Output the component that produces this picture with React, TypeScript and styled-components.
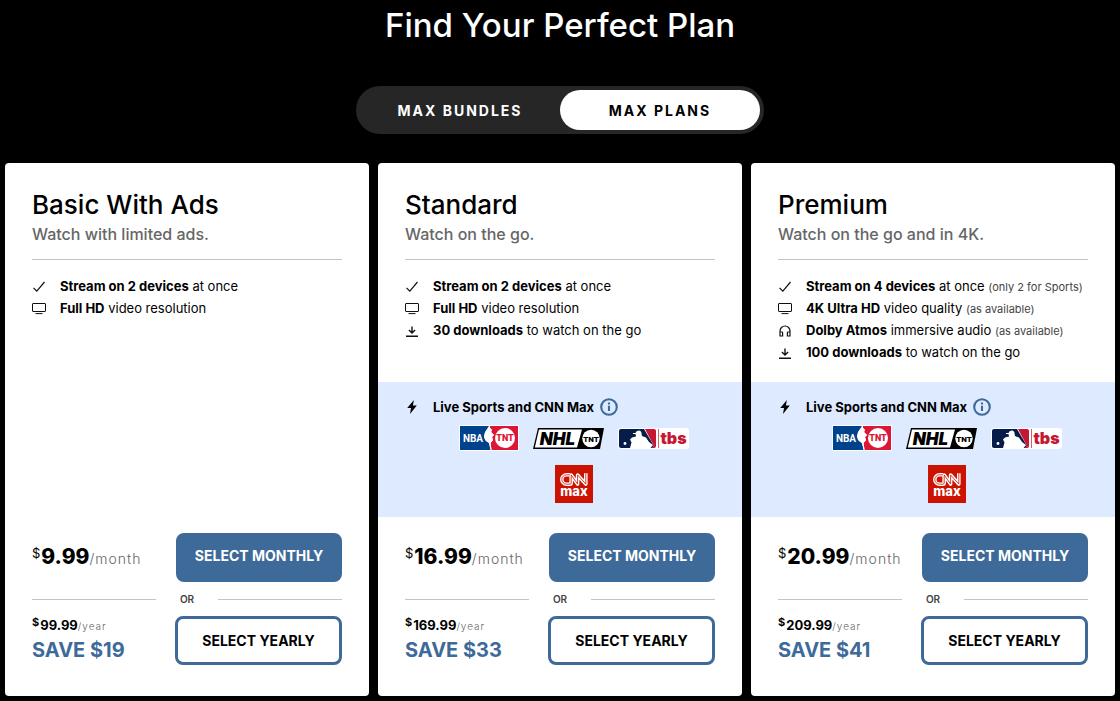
import React, { useState } from "react";
import styled, { createGlobalStyle, css } from "styled-components";

const GlobalStyle = createGlobalStyle`
  *, *::before, *::after { box-sizing: border-box; }
  body {
    margin: 0;
    background: #000;
    color: #000;
    font-family: Inter, "Liberation Sans", sans-serif;
  }
  h1, h2, p, ul { margin: 0; padding: 0; }
  button { font-family: inherit; cursor: pointer; }
`;

const BLUE = "#3e6a99";

const Page = styled.main`
  padding: 0 5px 5px;
`;

const PageTitle = styled.h1`
  padding-top: 5px;
  color: #fff;
  font-size: 33px;
  font-weight: 500;
  line-height: 40px;
  text-align: center;
`;

const Toggle = styled.div`
  display: grid;
  grid-template-columns: 1fr 1fr;
  width: 100%;
  max-width: 408px;
  margin: 41px auto 29px;
  padding: 4px;
  border-radius: 24px;
  background: #262626;
`;

const ToggleButton = styled.button<{ $active: boolean }>`
  height: 40px;
  padding: 0;
  border: 0;
  border-radius: 20px;
  background: ${(p) => (p.$active ? "#fff" : "transparent")};
  color: ${(p) => (p.$active ? "#000" : "#fff")};
  font-size: 14px;
  font-weight: 700;
  letter-spacing: 2px;
`;

const Plans = styled.section`
  display: grid;
  grid-template-columns: repeat(3, 1fr);
  gap: 9px;

  @media (max-width: 900px) {
    grid-template-columns: 1fr;
  }
`;

const Card = styled.article`
  display: flex;
  flex-direction: column;
  border-radius: 4px;
  background: #fff;
`;

const Summary = styled.div`
  flex: 1;
  padding: 26px 27px 19px;
`;

const PlanName = styled.h2`
  font-size: 26px;
  font-weight: 500;
  line-height: 32px;
`;

const Tagline = styled.p`
  padding: 2px 0 14px;
  border-bottom: 1px solid #c4c4c4;
  color: #666;
  font-size: 16px;
  font-weight: 500;
  line-height: 22px;
`;

const Features = styled.ul`
  margin-top: 15px;
  list-style: none;
`;

const Feature = styled.li`
  display: grid;
  grid-template-columns: 14px 1fr;
  gap: 14px;
  align-items: center;
  font-size: 13px;
  line-height: 22px;

  svg { display: block; }
`;

const Note = styled.small`
  color: #444;
  font-size: 11px;
  line-height: 1;
`;

const Extras = styled.div`
  padding: 14px 27px;
  background: #deeaff;
`;

const ExtrasHeading = styled(Feature).attrs({ as: "div" })`
  font-weight: 700;
`;

const HeadingText = styled.span`
  display: flex;
  align-items: center;
  gap: 6px;
`;

const InfoButton = styled.button`
  display: flex;
  padding: 0;
  border: 0;
  background: none;
`;

const Logos = styled.div`
  display: flex;
  flex-wrap: wrap;
  align-items: center;
  justify-content: center;
  gap: 14px;
  padding: 7px 20px 0 48px;

  svg { display: block; }
`;

const Purchase = styled.div`
  padding: 16px 27px 31px;
`;

const Option = styled.div`
  display: flex;
  align-items: center;
  justify-content: space-between;
`;

const MonthlyPrice = styled.p`
  display: flex;
  align-items: baseline;
  font-size: 21px;
  font-weight: 800;
  line-height: 32px;
`;

const YearlyPrice = styled(MonthlyPrice)`
  font-size: 13px;
  font-weight: 700;
  line-height: 18px;
`;

const Currency = styled.span<{ $light?: boolean }>`
  align-self: flex-start;
  padding-right: 1px;
  font-size: ${(p) => (p.$light ? "13px" : "11px")};
  font-weight: ${(p) => (p.$light ? 400 : 700)};
  line-height: ${(p) => (p.$light ? "24px" : "12px")};
`;

const Period = styled.span<{ $small?: boolean }>`
  color: #666;
  font-size: ${(p) => (p.$small ? "10px" : "14px")};
  font-weight: 300;
  letter-spacing: 1px;
`;

const Saving = styled.p`
  color: ${BLUE};
  font-size: 20px;
  font-weight: 700;
  line-height: 30px;
`;

const SelectButton = styled.button<{ $outline?: boolean }>`
  width: 166px;
  height: 49px;
  padding: 0 0 4px;
  border: 3px solid ${BLUE};
  border-radius: 8px;
  background: ${BLUE};
  color: #fff;
  font-size: 14px;
  font-weight: 700;
  ${(p) =>
    p.$outline &&
    css`
      width: 167px;
      padding: 0;
      background: #fff;
      color: #000;
    `}
`;

const Divider = styled.div`
  display: grid;
  grid-template-columns: 2fr 1fr 2fr;
  align-items: center;
  height: 34px;
  color: #444;
  font-size: 10px;
  font-weight: 600;
  text-align: center;

  &::before, &::after {
    content: "";
    border-top: 1px solid #c4c4c4;
  }
`;

type IconName = "check" | "screen" | "audio" | "download" | "bolt";

const Icon = ({ name }: { name: IconName }) => (
  <svg width="14" height="14" viewBox="0 0 14 14" fill="none" stroke="#111" strokeWidth="1.2" aria-hidden="true">
    {name === "check" && <path d="M1.5 8.8 4.8 12.2 12.5 3" />}
    {name === "screen" && <path d="M1 2.5H13Q13.5 2.5 13.5 3V10Q13.5 10.5 13 10.5H1Q.5 10.5 .5 10V3Q.5 2.5 1 2.5ZM3.5 12.6H10.5" strokeWidth="1" />}
    {name === "audio" && (
      <path d="M2 12.6V8A5 5 0 0 1 12 8V12.6M2 9H3.8Q4.6 9 4.6 9.8V13H2V9ZM12 9H10.2Q9.4 9 9.4 9.8V13H12V9Z" />
    )}
    {name === "download" && <path d="M7 3.5V10M3.9 7 7 10.1 10.1 7M1 13.3H13" strokeWidth="1.4" />}
    {name === "bolt" && <path d="M8.9 0 2.2 8H6L5 14 11.8 5.6H7.9Z" fill="#000" stroke="none" />}
  </svg>
);

const InfoIcon = () => (
  <svg width="18" height="18" viewBox="0 0 18 18" fill="none" stroke={BLUE} aria-hidden="true">
    <circle cx="9" cy="9" r="7.8" strokeWidth="2.1" />
    <path d="M9 7.8V13M9 4.6V6.5" strokeWidth="2.1" />
  </svg>
);

const NbaLogo = () => (
  <svg width="60" height="26" viewBox="0 0 60 26" role="img" aria-label="NBA on TNT">
    <path fill="#fff" d="M0 0H60V26H0Z" />
    <path fill="#00438c" d="M1 1H30L31 3 28 5 26 8 25 12 27 16 30 18 32 25H1Z" />
    <path fill="#dc1735" d="M31 1H59V25H32.5L31.5 18 34 15 33 12 35 10 32 7 33 5 31 3Z" />
    <path fill="#fff" d="M30 1H31L31 3 33 5 32 7 35 10 33 12 34 15 31.5 18 32.5 25H31.5L30 18 26 15 25 11 26 7 28 4Z" />
    <circle cx="46" cy="13" r="10" fill="#fff" />
    <text x="14" y="17" textAnchor="middle" fill="#fff" fontFamily="Roboto, sans-serif" fontWeight="700" fontSize="10">NBA</text>
    <text x="46" y="16" textAnchor="middle" fill="#dc1735" fontFamily="Roboto, sans-serif" fontWeight="900" fontSize="9">TNT</text>
  </svg>
);

const NhlLogo = () => (
  <svg width="71" height="21" viewBox="0 0 71 21" role="img" aria-label="NHL on TNT">
    <path fill="#000" d="M5 0H71L67 21H0Z" />
    <path fill="#fff" d="M6 1.5H49L44 19.5H1.8Z" />
    <text x="24.5" y="16.5" textAnchor="middle" fill="#000" fontFamily="Inter, sans-serif" fontWeight="900" fontStyle="italic" fontSize="17">NHL</text>
    <circle cx="58" cy="10.5" r="8.7" fill="#fff" />
    <text x="58" y="13.5" textAnchor="middle" fill="#000" fontFamily="Roboto, sans-serif" fontWeight="900" fontSize="8">TNT</text>
  </svg>
);

const MlbLogo = () => (
  <svg width="71" height="21" viewBox="0 0 71 21" role="img" aria-label="MLB on TBS">
    <rect width="71" height="21" rx="3" fill="#fff" />
    <path fill="#071d49" d="M3 1H26L36 18 34 20H3Q1 20 1 18V3Q1 1 3 1Z" />
    <path fill="#c51732" d="M27 1H36Q38 1 38 3V18Q38 20 36 20H33L36 18Z" />
    <path fill="#fff" d="M12 20 13.5 14.5 12 11.5 14 9.5 18 8.5 17.5 6H15V5H17.5Q18 2.5 20.8 2.5 23.6 2.8 23.6 6L24 8 28 9.5 31 14 35 17 32.5 20Z" />
    <circle cx="7" cy="15.5" r="1.4" fill="#fff" />
    <path stroke="#c51732" strokeWidth=".7" d="M40.5 1V20" />
    <text x="55.5" y="16" textAnchor="middle" fill="#c51732" fontFamily="Inter, sans-serif" fontWeight="900" fontSize="16">tbs</text>
  </svg>
);

const CnnLogo = () => (
  <svg width="38" height="38" viewBox="0 0 38 38" role="img" aria-label="CNN Max">
    <path fill="#cc1200" d="M0 0H38V38H0Z" />
    <g fill="none" strokeLinejoin="round">
      <path stroke="#fff" strokeWidth="3.6" d="M15 9.8H11.5A4.7 4.7 0 0 0 11.5 19.2H15Q16.2 19.2 16.2 18V10L22.6 19V10L30.8 19V8.2" />
      <path stroke="#cc1200" strokeWidth=".8" d="M15 9.8H11.5A4.7 4.7 0 0 0 11.5 19.2H15Q16.2 19.2 16.2 18V10L22.6 19V10L30.8 19V8.2" />
    </g>
    <text x="19" y="30.5" textAnchor="middle" fill="#fff" fontFamily="Inter, sans-serif" fontWeight="800" fontSize="13">max</text>
  </svg>
);

interface PlanFeature {
  icon: IconName;
  bold: string;
  text: string;
  note?: string;
}

interface Plan {
  name: string;
  tagline: string;
  features: PlanFeature[];
  sports: boolean;
  monthly: string;
  yearly: string;
  saving: string;
}

const plans: Plan[] = [
  {
    name: "Basic With Ads",
    tagline: "Watch with limited ads.",
    features: [
      { icon: "check", bold: "Stream on 2 devices", text: "at once" },
      { icon: "screen", bold: "Full HD", text: "video resolution" },
    ],
    sports: false,
    monthly: "9.99",
    yearly: "99.99",
    saving: "$19",
  },
  {
    name: "Standard",
    tagline: "Watch on the go.",
    features: [
      { icon: "check", bold: "Stream on 2 devices", text: "at once" },
      { icon: "screen", bold: "Full HD", text: "video resolution" },
      { icon: "download", bold: "30 downloads", text: "to watch on the go" },
    ],
    sports: true,
    monthly: "16.99",
    yearly: "169.99",
    saving: "$33",
  },
  {
    name: "Premium",
    tagline: "Watch on the go and in 4K.",
    features: [
      { icon: "check", bold: "Stream on 4 devices", text: "at once", note: "(only 2 for Sports)" },
      { icon: "screen", bold: "4K Ultra HD", text: "video quality", note: "(as available)" },
      { icon: "audio", bold: "Dolby Atmos", text: "immersive audio", note: "(as available)" },
      { icon: "download", bold: "100 downloads", text: "to watch on the go" },
    ],
    sports: true,
    monthly: "20.99",
    yearly: "209.99",
    saving: "$41",
  },
];

const PlanCard = ({ plan }: { plan: Plan }) => (
  <Card>
    <Summary>
      <PlanName>{plan.name}</PlanName>
      <Tagline>{plan.tagline}</Tagline>
      <Features>
        {plan.features.map((f) => (
          <Feature key={f.bold}>
            <Icon name={f.icon} />
            <span>
              <b>{f.bold}</b> {f.text} {f.note && <Note>{f.note}</Note>}
            </span>
          </Feature>
        ))}
      </Features>
    </Summary>
    {plan.sports && (
      <Extras>
        <ExtrasHeading>
          <Icon name="bolt" />
          <HeadingText>
            Live Sports and CNN Max
            <InfoButton type="button" aria-label="About Live Sports and CNN Max">
              <InfoIcon />
            </InfoButton>
          </HeadingText>
        </ExtrasHeading>
        <Logos>
          <NbaLogo />
          <NhlLogo />
          <MlbLogo />
          <CnnLogo />
        </Logos>
      </Extras>
    )}
    <Purchase>
      <Option>
        <MonthlyPrice>
          <Currency $light>$</Currency>
          {plan.monthly}
          <Period>/month</Period>
        </MonthlyPrice>
        <SelectButton type="button">SELECT MONTHLY</SelectButton>
      </Option>
      <Divider>OR</Divider>
      <Option>
        <div>
          <YearlyPrice>
            <Currency>$</Currency>
            {plan.yearly}
            <Period $small>/year</Period>
          </YearlyPrice>
          <Saving>SAVE {plan.saving}</Saving>
        </div>
        <SelectButton type="button" $outline>SELECT YEARLY</SelectButton>
      </Option>
    </Purchase>
  </Card>
);

export default function App() {
  const [tab, setTab] = useState("MAX PLANS");
  return (
    <>
      <GlobalStyle />
      <Page>
        <PageTitle>Find Your Perfect Plan</PageTitle>
        <Toggle>
          {["MAX BUNDLES", "MAX PLANS"].map((label) => (
            <ToggleButton
              key={label}
              type="button"
              aria-pressed={tab === label}
              $active={tab === label}
              onClick={() => setTab(label)}
            >
              {label}
            </ToggleButton>
          ))}
        </Toggle>
        <Plans>
          {plans.map((plan) => (
            <PlanCard key={plan.name} plan={plan} />
          ))}
        </Plans>
      </Page>
    </>
  );
}
